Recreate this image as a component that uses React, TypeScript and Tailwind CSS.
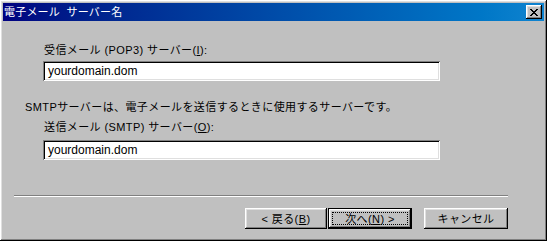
import React from 'react';

const raised =
  'shadow-[inset_-1px_-1px_0_#000000,inset_1px_1px_0_#ffffff,inset_-2px_-2px_0_#808080,inset_2px_2px_0_#dfdfdf]';
const sunken =
  'shadow-[inset_1px_1px_0_#808080,inset_-1px_-1px_0_#ffffff,inset_2px_2px_0_#000000,inset_-2px_-2px_0_#dfdfdf]';

const xPattern = ['11000011', '01100110', '00111100', '00011000', '00111100', '01100110', '11000011'];

const CloseGlyph: React.FC = () => (
  <svg width="8" height="7" viewBox="0 0 8 7" shapeRendering="crispEdges">
    {xPattern.map((row, y) =>
      row.split('').map((c, x) => (c === '1' ? <rect key={`${x}-${y}`} x={x} y={y} width="1" height="1" fill="#000" /> : null)),
    )}
  </svg>
);

const Field: React.FC<{ value: string }> = ({ value }) => (
  <div className={`ml-[40px] w-[397px] h-[20px] bg-white flex items-center pl-[5px] ${sunken}`}>
    <span className="text-[12px] tracking-normal font-['Liberation_Sans',sans-serif] leading-none">{value}</span>
  </div>
);

const App: React.FC = () => {
  return (
    <div
      className={`w-[547px] h-[241px] bg-[#c0c0c0] p-[3px] flex flex-col text-black text-[11px] leading-[14px] tracking-[0.4px] font-['Liberation_Sans','Noto_Sans_CJK_JP',sans-serif] ${raised}`}
    >
      <div className="h-[18px] flex items-center justify-between bg-linear-to-r from-[#000080] to-[#1084d0] pl-[1px] pr-[2px]">
        <span className="text-white text-[11px] leading-none tracking-[0.2px]">電子メール&nbsp;&nbsp;サーバー名</span>
        <div className={`w-[16px] h-[14px] bg-[#c0c0c0] flex items-center justify-center ${raised}`}>
          <CloseGlyph />
        </div>
      </div>

      <div className="flex flex-col pt-[22px]">
        <div className="pl-[41px]">
          受信メール (POP3) サーバー(<span className="underline">I</span>):
        </div>
        <div className="mt-[4px]">
          <Field value="yourdomain.dom" />
        </div>

        <div className="mt-[19px] pl-[22px]">SMTPサーバーは、電子メールを送信するときに使用するサーバーです。</div>
        <div className="mt-[6px] pl-[41px]">
          送信メール (SMTP) サーバー(<span className="underline">O</span>):
        </div>
        <div className="mt-[6px]">
          <Field value="yourdomain.dom" />
        </div>

        <div className="mt-[35px] ml-[11px] w-[494px] h-[2px] border-t border-t-[#808080] border-b border-b-white" />

        <div className="mt-[11px] pl-[242px] flex">
          <button className={`w-[82px] h-[21px] bg-[#c0c0c0] flex items-center justify-center ${raised}`}>
            &lt; 戻る(<span className="underline">B</span>)
          </button>
          <button className="ml-[1px] w-[84px] h-[21px] bg-[#c0c0c0] border border-black p-0">
            <div className={`w-full h-full flex ${raised} p-[3px]`}>
              <div className="flex-1 border border-dotted border-black flex items-center justify-center">
                次へ(<span className="underline">N</span>) &gt;
              </div>
            </div>
          </button>
          <button className={`ml-[12px] w-[84px] h-[21px] bg-[#c0c0c0] flex items-center justify-center ${raised}`}>
            キャンセル
          </button>
        </div>
      </div>
    </div>
  );
};

export default App;
